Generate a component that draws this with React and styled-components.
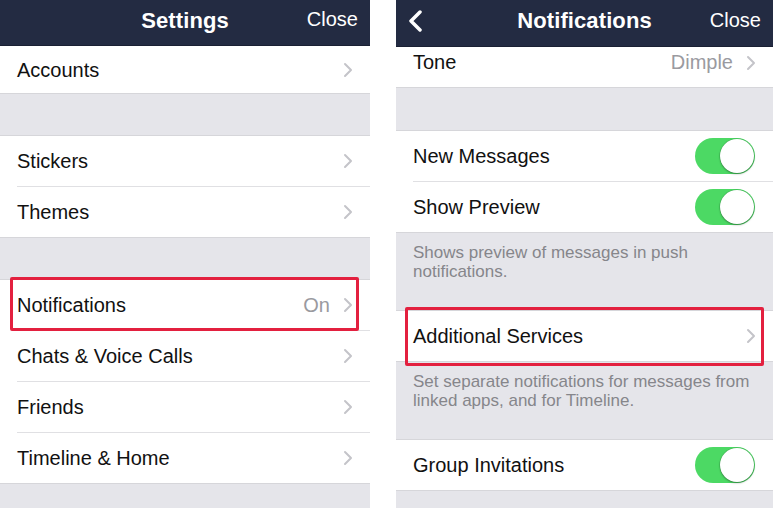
import React from "react";
import styled, { createGlobalStyle } from "styled-components";

const Global = createGlobalStyle`
  html, body { margin: 0; padding: 0; background: #fff; }
  body { font-family: "Liberation Sans", Arial, sans-serif; -webkit-font-smoothing: antialiased; }
  * { box-sizing: border-box; }
`;

const Page = styled.div`
  width: 773px;
  height: 508px;
  display: flex;
  justify-content: space-between;
  overflow: hidden;
  background: #fff;
`;

const Panel = styled.div`
  width: ${(p) => p.$w}px;
  height: 508px;
  display: flex;
  flex-direction: column;
  background: #e5e5ea;
  overflow: hidden;
`;

const Header = styled.div`
  height: ${(p) => p.$h}px;
  flex: none;
  background: #232b42;
  border-bottom: 1px solid #1a2033;
  display: grid;
  grid-template-columns: 80px 1fr 80px;
  align-items: center;
  color: #fff;
  padding: 0 12px 4px 12px;
`;

const Title = styled.div`
  text-align: center;
  font-weight: bold;
  font-size: 22px;
  letter-spacing: 0.1px;
`;

const HeaderBtn = styled.div`
  font-size: 20px;
  text-align: right;
  margin-top: -2px;
`;

const Back = styled.div`
  display: flex;
  align-items: center;
`;

const Group = styled.div`
  background: #fff;
  border-top: 1px solid ${(p) => (p.$noTop ? "transparent" : "#d6d6da")};
  border-bottom: 1px solid #d6d6da;
  flex: none;
`;

const Gap = styled.div`
  height: ${(p) => p.$h}px;
  flex: none;
`;

const Row = styled.div`
  position: relative;
  height: ${(p) => p.$h || 50}px;
  display: flex;
  align-items: center;
  padding: 0 17px ${(p) => p.$pb || 0}px 17px;
  font-size: 20px;
  color: #111;
`;

const Separator = styled.div`
  height: 1px;
  margin-left: 17px;
  background: #e0e0e3;
`;

const Label = styled.span`
  flex: 1;
`;

const Value = styled.span`
  color: #9a9a9f;
  margin-right: 13px;
`;

const Highlight = styled.div`
  position: absolute;
  left: ${(p) => p.$l}px;
  right: ${(p) => p.$r}px;
  top: ${(p) => p.$t}px;
  bottom: ${(p) => p.$b}px;
  border: 3px solid #e3203f;
  border-radius: 2px;
  pointer-events: none;
`;

const Note = styled.div`
  flex: none;
  height: ${(p) => p.$h}px;
  padding: 10px 17px 0 17px;
  font-size: 17px;
  line-height: 19px;
  color: #86868b;
`;

const SwitchTrack = styled.div`
  position: relative;
  width: 60px;
  height: 36px;
  border-radius: 18px;
  background: #4cd964;
  margin-right: 1px;
`;

const SwitchKnob = styled.div`
  position: absolute;
  right: 1px;
  top: 1px;
  width: 34px;
  height: 34px;
  border-radius: 50%;
  background: #fff;
  box-shadow: 0 1px 2px rgba(0, 0, 0, 0.35), 0 0 0 0.5px rgba(0, 0, 0, 0.15);
`;

const Chevron = () => (
  <svg width="10" height="16" viewBox="0 0 10 16" style={{ flex: "none" }}>
    <polyline points="2,2 8,8 2,14" fill="none" stroke="#c4c4c9" strokeWidth="2" strokeLinecap="round" strokeLinejoin="round" />
  </svg>
);

const BackIcon = () => (
  <svg width="16" height="22" viewBox="0 0 16 22">
    <polyline points="12,2 3,11 12,20" fill="none" stroke="#fff" strokeWidth="3.5" strokeLinecap="round" strokeLinejoin="round" />
  </svg>
);

const Switch = () => (
  <SwitchTrack>
    <SwitchKnob />
  </SwitchTrack>
);

const NavRow = ({ label, value, h, pb, children }) => (
  <Row $h={h} $pb={pb}>
    <Label>{label}</Label>
    {value && <Value>{value}</Value>}
    <Chevron />
    {children}
  </Row>
);

const ToggleRow = ({ label }) => (
  <Row>
    <Label>{label}</Label>
    <Switch />
  </Row>
);

export default function App() {
  return (
    <>
      <Global />
      <Page>
        <Panel $w={370}>
          <Header $h={46}>
            <span />
            <Title>Settings</Title>
            <HeaderBtn>Close</HeaderBtn>
          </Header>
          <Group $noTop>
            <NavRow label="Accounts" h={46} />
          </Group>
          <Gap $h={41} />
          <Group>
            <NavRow label="Stickers" />
            <Separator />
            <NavRow label="Themes" />
          </Group>
          <Gap $h={41} />
          <Group>
            <NavRow label="Notifications" value="On">
              <Highlight $l={10} $r={11} $t={-3} $b={-1} />
            </NavRow>
            <Separator />
            <NavRow label="Chats & Voice Calls" />
            <Separator />
            <NavRow label="Friends" />
            <Separator />
            <NavRow label="Timeline & Home" />
          </Group>
        </Panel>

        <Panel $w={377}>
          <Header $h={47}>
            <Back>
              <BackIcon />
            </Back>
            <Title>Notifications</Title>
            <HeaderBtn>Close</HeaderBtn>
          </Header>
          <Group $noTop>
            <NavRow label="Tone" value="Dimple" h={39} pb={10} />
          </Group>
          <Gap $h={42} />
          <Group>
            <ToggleRow label="New Messages" />
            <Separator />
            <ToggleRow label="Show Preview" />
          </Group>
          <Note $h={77}>Shows preview of messages in push notifications.</Note>
          <Group>
            <NavRow label="Additional Services">
              <Highlight $l={9} $r={9} $t={-4} $b={-5} />
            </NavRow>
          </Group>
          <Note $h={77}>Set separate notifications for messages from linked apps, and for Timeline.</Note>
          <Group>
            <ToggleRow label="Group Invitations" />
          </Group>
        </Panel>
      </Page>
    </>
  );
}
